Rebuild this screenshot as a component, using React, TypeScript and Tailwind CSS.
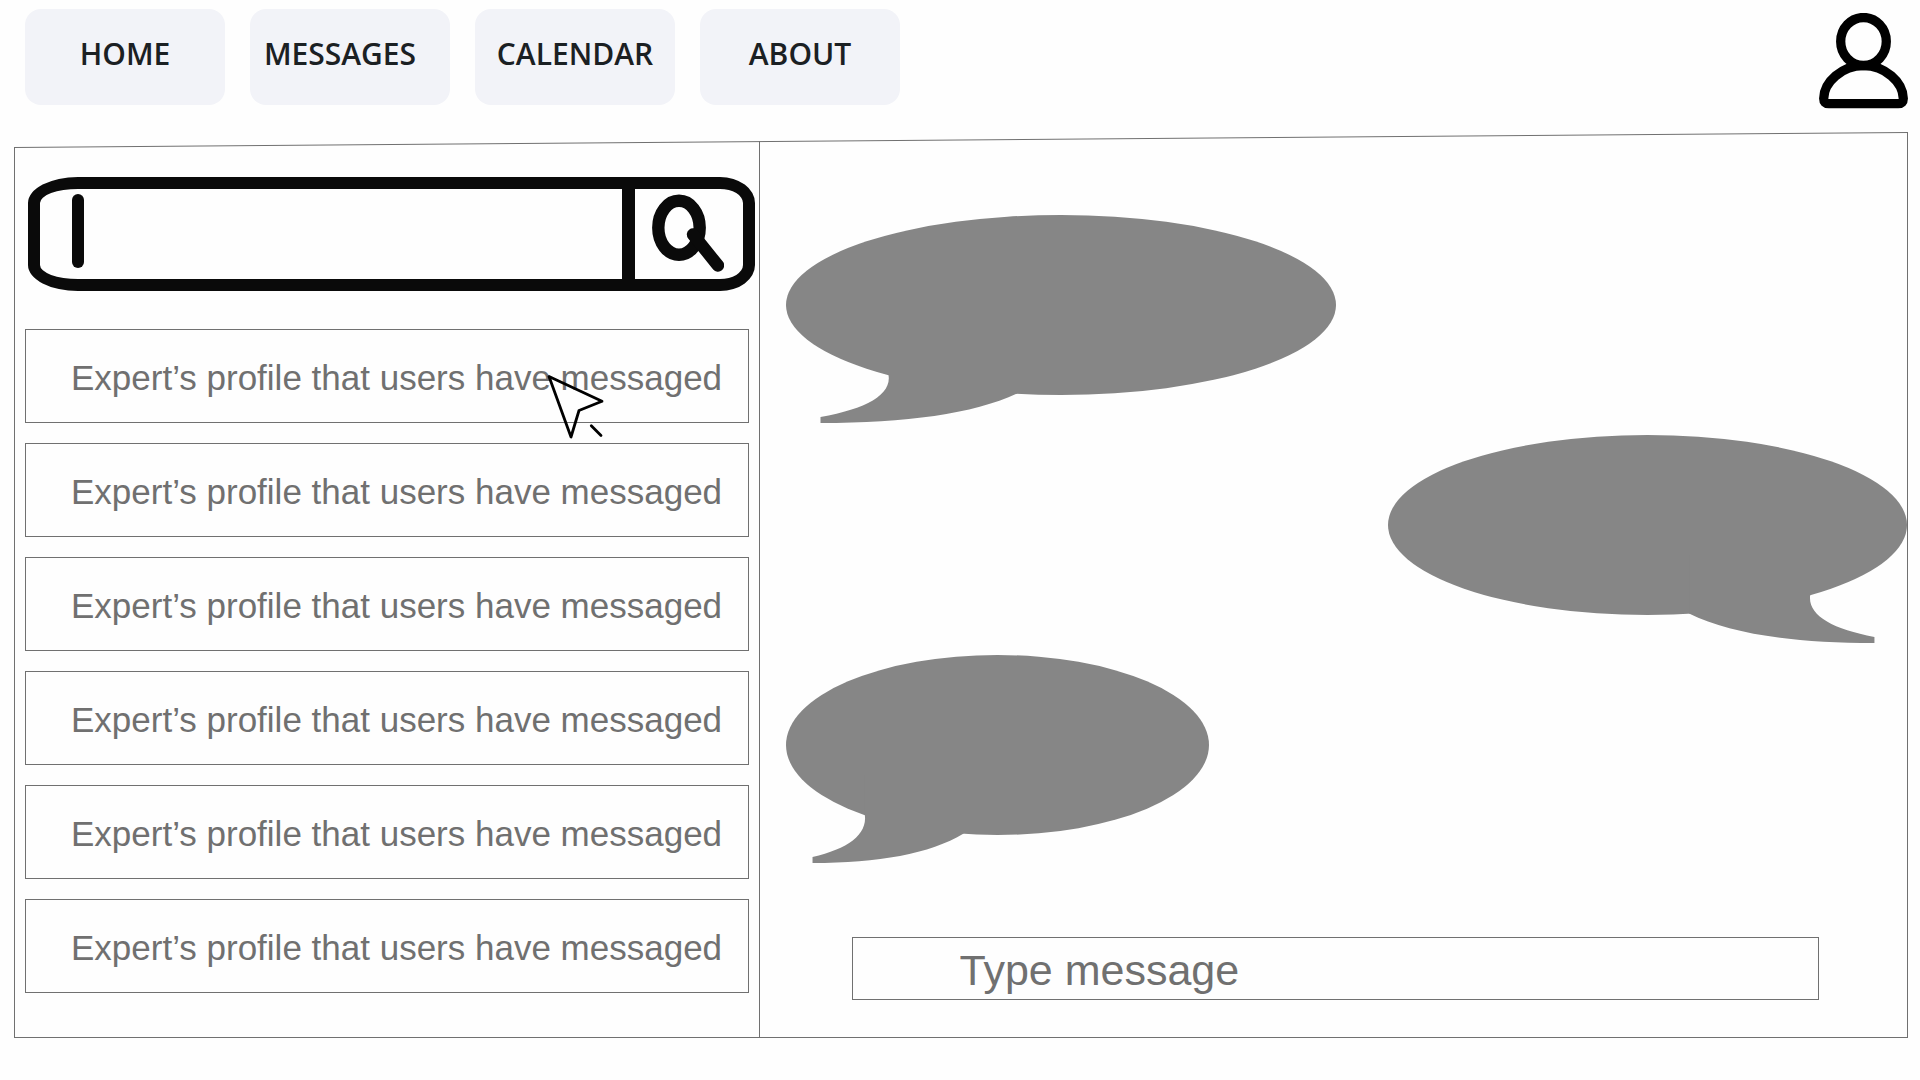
import { useState } from 'react';

const navItems = [
  { label: 'HOME', className: '' },
  { label: 'MESSAGES', className: 'pr-5' },
  { label: 'CALENDAR', className: '' },
  { label: 'ABOUT', className: '' },
];

const profiles = [1, 2, 3, 4, 5, 6];

const bubbles = [
  { id: 1, className: 'ml-[26px] w-[550px]' },
  { id: 2, className: 'w-[519px] self-end -scale-x-100' },
  { id: 3, className: 'ml-[26px] w-[423px]' },
];

function UserIcon() {
  return (
    <svg className="h-24 w-[89px]" viewBox="39 13 89 96" fill="none" stroke="#000" strokeWidth="9.3" aria-hidden="true">
      <ellipse cx="83.5" cy="41.5" rx="22.8" ry="24" />
      <path d="M83.5 65.7C62 65.7 43.9 82 43.7 98.5Q43.7 103.7 48.8 103.7H118.2Q123.3 103.7 123.3 98.5C123 82 105 65.7 83.5 65.7Z" />
    </svg>
  );
}

function SearchIcon() {
  return (
    <svg className="h-[78px] w-[72px]" viewBox="652 194 72 78" fill="none" stroke="#0a0a0a" strokeWidth="12.4" strokeLinecap="round" aria-hidden="true">
      <ellipse cx="679" cy="227.8" rx="20.7" ry="27" />
      <path d="M693 234.5L718 265.5" />
    </svg>
  );
}

function CursorIcon() {
  return (
    <svg
      className="pointer-events-none absolute left-[532px] top-[242px] h-[68px] w-[60px]"
      viewBox="546 374 60 68"
      fill="none"
      stroke="#000"
      strokeWidth="2.8"
      strokeLinejoin="round"
      strokeLinecap="round"
      aria-hidden="true"
    >
      <path d="M549 376.5L602 401.3L579 410.5L571 437Z" />
      <path d="M591.3 425.8L601 435.5" />
    </svg>
  );
}

function Bubble({ className }: { className: string }) {
  return (
    <svg className={`h-[208px] max-w-full ${className}`} viewBox="0 0 550 208" preserveAspectRatio="none" fill="#868686" aria-hidden="true">
      <ellipse cx="275" cy="90" rx="275" ry="90" />
      <path d="M102.5 159.5C106 180 80 194 34.5 202V208C120 208 187 199 231 178.5L231 120H102.5Z" />
    </svg>
  );
}

export default function App() {
  const [query, setQuery] = useState('');
  const [message, setMessage] = useState('');

  return (
    <div className="min-h-screen bg-[#fefefe] pb-[42px] font-['Liberation_Sans',Arial,sans-serif] text-[#707070]">
      <header className="flex items-start justify-between pb-[23px] pl-[25px] pr-3 pt-[9px]">
        <nav className="flex gap-[25px]">
          {navItems.map((item) => (
            <a
              key={item.label}
              href="#"
              className={`flex h-24 w-[200px] items-center justify-center rounded-2xl bg-[#f2f3f8] pb-2 font-['Open_Sans','Noto_Sans',sans-serif] text-[30px] font-semibold text-[#1b2023] ${item.className}`}
            >
              {item.label}
            </a>
          ))}
        </nav>
        <button type="button" aria-label="Profile" className="mt-1">
          <UserIcon />
        </button>
      </header>

      <div className="relative ml-[14px] mr-3">
        {/* the frame is higher on the right, so its top edge is a slanted line */}
        <svg className="absolute inset-x-0 top-0 h-4 w-full" aria-hidden="true">
          <line x1="0" y1="15.5" x2="100%" y2="0.5" stroke="#707070" />
        </svg>

        <main className="flex border-x border-b border-[#707070] [clip-path:polygon(0_15px,100%_0,100%_100%,0_100%)]">
          <aside className="w-[39.3%] shrink-0 pb-11 pt-[45px]">
            <form
              role="search"
              onSubmit={(e) => e.preventDefault()}
              className="ml-[13px] mr-1 flex h-[114px] items-stretch border-[12px] border-[#0a0a0a] rounded-[50px_35px_35px_50px/26px]"
            >
              <span className="ml-8 mt-[5px] h-[74px] w-3 shrink-0 rounded-full bg-[#0a0a0a]" />
              <input
                type="text"
                aria-label="Search profiles"
                value={query}
                onChange={(e) => setQuery(e.target.value)}
                className="min-w-0 flex-1 bg-transparent px-4 text-4xl outline-none"
              />
              <button type="submit" aria-label="Search" className="w-[121px] shrink-0 border-l-[13px] border-[#0a0a0a] pb-0.5 pl-[17px]">
                <SearchIcon />
              </button>
            </form>

            <ul className="mx-[10px] mt-[38px] flex flex-col gap-5">
              {profiles.map((id) => (
                <li key={id}>
                  <a href="#" className="flex h-[94px] items-center whitespace-nowrap border border-[#707070] pl-[45px] pt-1 text-[35px]">
                    Expert’s profile that users have messaged
                  </a>
                </li>
              ))}
            </ul>
          </aside>

          <section className="flex min-w-0 flex-1 flex-col border-l border-[#707070] pb-[37px] pt-[83px]">
            <div className="flex flex-col gap-3">
              {bubbles.map((bubble) => (
                <Bubble key={bubble.id} className={bubble.className} />
              ))}
            </div>
            <div className="ml-[92px] mr-[88px] mt-[74px] flex">
              <input
                type="text"
                aria-label="Type message"
                placeholder="Type message"
                value={message}
                onChange={(e) => setMessage(e.target.value)}
                className="h-[63px] min-w-0 flex-1 border border-[#707070] bg-transparent pl-[107px] pt-1 text-[43px] outline-none placeholder:text-[#707070]"
              />
            </div>
          </section>
        </main>

        <CursorIcon />
      </div>
    </div>
  );
}
